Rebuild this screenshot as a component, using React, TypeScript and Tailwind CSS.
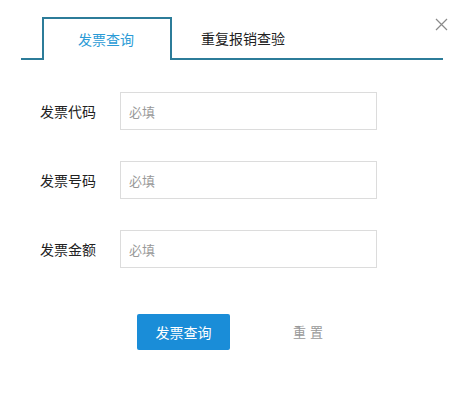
const fields = ['发票代码', '发票号码', '发票金额'];

/** Invoice lookup dialog */
export default function App() {
    return (
        <div
            className="relative w-[456px] h-[406px] bg-white overflow-hidden"
            style={{ fontFamily: '"Noto Sans CJK SC", "Noto Sans", sans-serif' }}
        >
            {/* CLOSE */}
            <button className="absolute left-[434px] top-[17px] w-[14px] h-[14px] flex items-center justify-center">
                <svg width="13" height="13" viewBox="0 0 13 13" fill="none">
                    <path d="M1 1L12 12M12 1L1 12" stroke="#8a8a8a" strokeWidth="1.2" />
                </svg>
            </button>

            {/* TABS */}
            <div className="flex ml-[21px] mt-[17px] w-[422px] h-[43px]">
                <div className="w-[21px] border-b-2 border-[#2c7c99]" />
                <div className="w-[130px] border-2 border-b-0 border-[#2c7c99] flex items-center pl-[34px] text-[14px] text-[#2b9bd6]">
                    发票查询
                </div>
                <div className="flex-1 border-b-2 border-[#2c7c99] flex items-center pl-[29px] text-[14px] text-[#222] pt-[2px]">
                    重复报销查验
                </div>
            </div>

            {/* FORM */}
            <div className="flex flex-col gap-[31px] mt-[32px] pl-[40px]">
                {fields.map((label) => (
                    <div key={label} className="flex items-center">
                        <span className="w-[80px] text-[14px] text-[#222]">{label}</span>
                        <input
                            className="w-[257px] h-[38px] border border-[#dcdcdc] px-[8px] text-[13px] outline-none placeholder:text-[#999]"
                            placeholder="必填"
                        />
                    </div>
                ))}
            </div>

            {/* ACTIONS */}
            <div className="flex items-center mt-[46px] pl-[137px]">
                <button className="w-[93px] h-[36px] rounded-[2px] bg-[#1a8dd8] text-white text-[14px]">
                    发票查询
                </button>
                <button className="ml-[63px] text-[13px] text-[#999] tracking-[4px]">
                    重置
                </button>
            </div>
        </div>
    );
}
